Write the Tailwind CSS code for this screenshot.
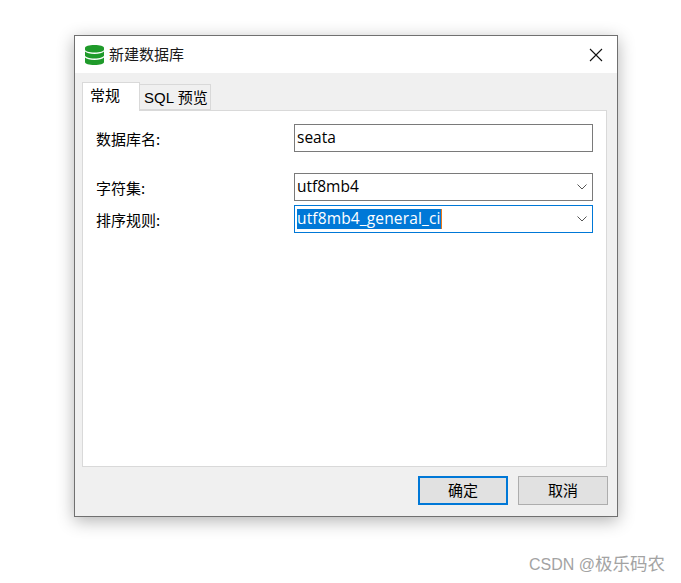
<!DOCTYPE html>
<html lang="zh">
<head>
    <meta charset="UTF-8">
    <script src="https://cdn.jsdelivr.net/npm/@tailwindcss/browser@4"></script>
    <title>新建数据库</title>
</head>
<body>
    <div class="relative h-[583px] w-[681px] overflow-hidden bg-white pl-[74px] pt-[35px] text-[15px] leading-none text-black font-['Noto_Sans_CJK_SC','Noto_Sans',sans-serif]">
        <!-- dialog -->
        <div class="flex h-[482px] w-[544px] flex-col border border-[#707070] bg-[#f0f0f0] shadow-[0_4px_16px_rgba(0,0,0,0.3)]">
            <!-- title bar -->
            <div class="flex h-[37px] shrink-0 items-center bg-white pl-[10px] pr-[14px]">
                <svg class="h-[20px] w-[19px]" viewBox="0 0 19 20">
                    <path fill="#1f9a2a" d="M0 3C0 1 4 0 9.500 0S19 1 19 3v1.500C19 6.500 15 7.500 9.500 7.500S0 6.500 0 4.500z"/>
                    <path fill="#1f9a2a" d="M0 6.500C1.500 8 5 9 9.500 9S17.500 8 19 6.500v4C19 12 15 13.500 9.500 13.500S0 12 0 10.500z"/>
                    <path fill="#1f9a2a" d="M0 12.500C1.500 14 5 15 9.500 15s8-1 9.500-2.500V17c0 1.800-4 3-9.500 3S0 18.800 0 17z"/>
                </svg>
                <span class="ml-[5px] pb-[2px] text-[#1a1a1a]">新建数据库</span>
                <svg class="ml-auto h-[14px] w-[14px]" viewBox="0 0 14 14">
                    <path d="M1 1l12 12M13 1L1 13" stroke="#111" stroke-width="1.100" fill="none"/>
                </svg>
            </div>
            <!-- tabs -->
            <div class="relative z-10 mt-[9px] flex h-[28px] shrink-0 items-end pl-[7px]">
                <div class="-mb-px flex h-[29px] w-[58px] items-center border border-b-0 border-[#d9d9d9] bg-white pb-[5px] pl-[7px]">常规</div>
                <div class="flex h-[26px] w-[71px] items-center border border-l-0 border-[#d9d9d9] bg-[#f0f0f0] pl-[4px] pt-[1px] font-['Liberation_Sans','Noto_Sans_CJK_SC',sans-serif] whitespace-nowrap">SQL 预览</div>
            </div>
            <!-- panel -->
            <div class="mx-[7px] flex h-[357px] w-[525px] shrink-0 flex-col border border-[#d9d9d9] bg-white pl-[13px] pt-[13px]">
                <div class="flex h-[28px] items-center">
                    <span class="w-[198px]">数据库名:</span>
                    <div class="flex h-[28px] w-[299px] items-center border border-[#7a7a7a] pl-[2px] font-['Open_Sans',sans-serif] text-[15.500px]">seata</div>
                </div>
                <div class="mt-[21px] flex h-[28px] items-center">
                    <span class="w-[198px]">字符集:</span>
                    <div class="flex h-[28px] w-[299px] items-center justify-between border border-[#7a7a7a] pl-[2px] pr-[5px] font-['Open_Sans',sans-serif] text-[15.500px]">
                        <span>utf8mb4</span>
                        <svg class="h-[6px] w-[10px]" viewBox="0 0 10 6"><path d="M.5.500L5 5 9.500.500" stroke="#555" fill="none"/></svg>
                    </div>
                </div>
                <div class="mt-[4px] flex h-[28px] items-center">
                    <span class="w-[198px]">排序规则:</span>
                    <div class="flex h-[28px] w-[299px] items-center justify-between border border-[#0078d7] pl-[2px] pr-[5px] font-['Open_Sans',sans-serif] text-[15.500px]">
                        <span class="flex h-[20px] items-center border-r border-[#e8791a] bg-[#0078d7] tracking-[0.15px] text-white">utf8mb4_general_ci</span>
                        <svg class="h-[6px] w-[10px]" viewBox="0 0 10 6"><path d="M.5.500L5 5 9.500.500" stroke="#555" fill="none"/></svg>
                    </div>
                </div>
            </div>
            <!-- buttons -->
            <div class="mt-[9px] flex gap-[10px] pl-[343px]">
                <button class="h-[29px] w-[90px] border-2 border-[#0078d7] bg-[#e1e1e1] pb-[2px]">确定</button>
                <button class="h-[29px] w-[90px] border border-[#adadad] bg-[#e1e1e1] pb-[2px]">取消</button>
            </div>
        </div>
        <!-- watermark -->
        <div class="absolute left-[529px] top-[556px] whitespace-nowrap font-['Liberation_Sans','Noto_Sans_CJK_SC',sans-serif] text-[16px] text-[#a3a3a3]">CSDN @<span class="text-[17.500px]">极乐码农</span></div>
    </div>
</body>
</html>
